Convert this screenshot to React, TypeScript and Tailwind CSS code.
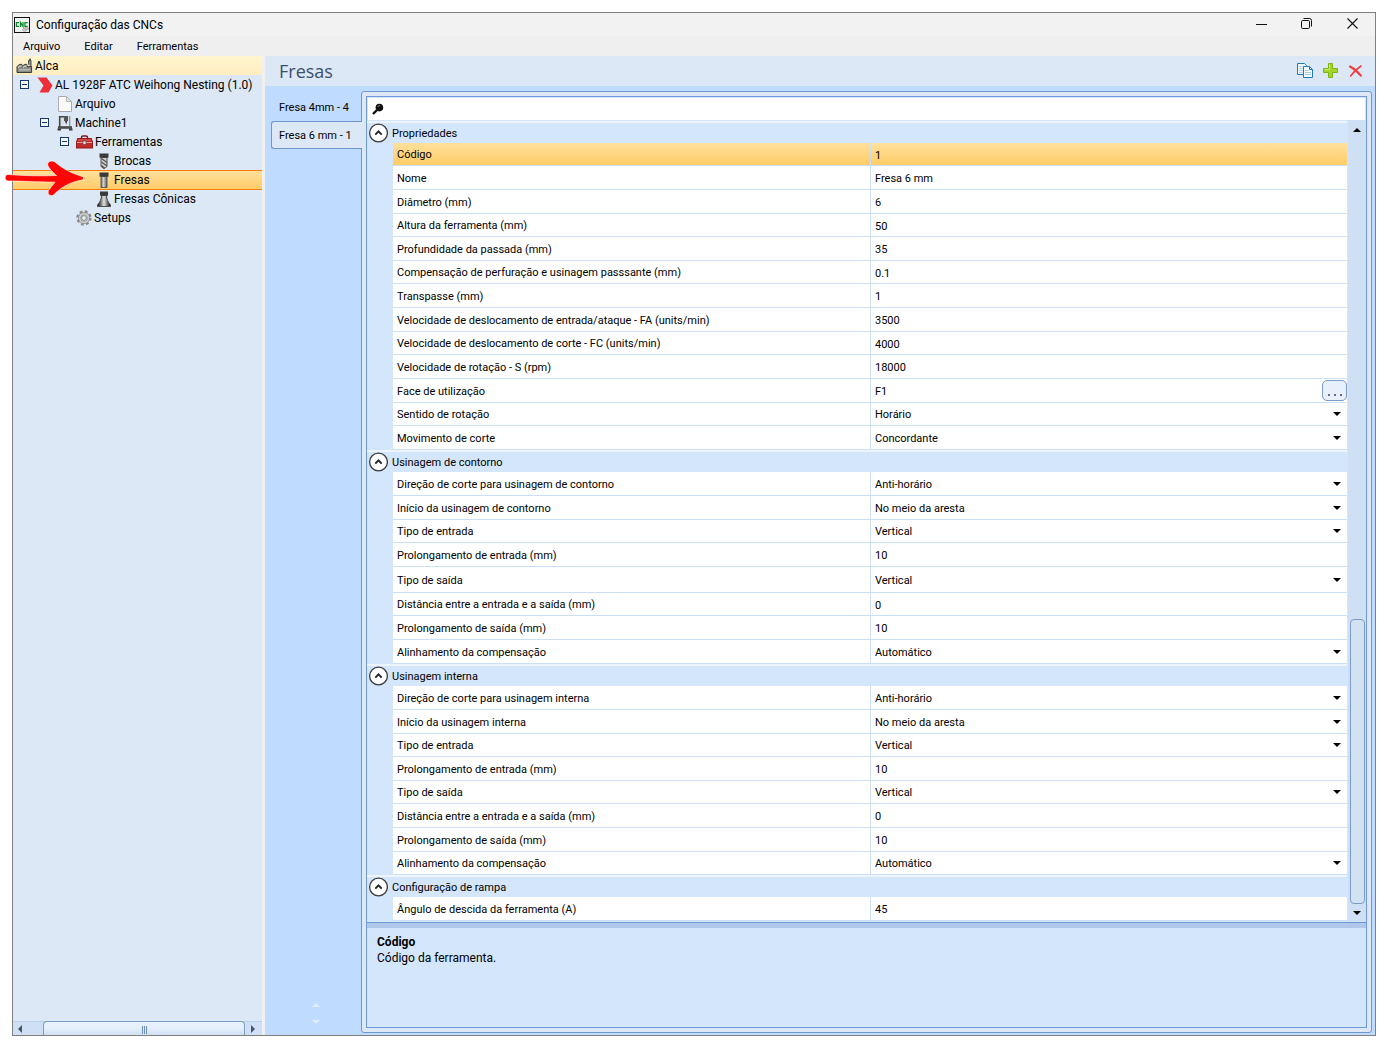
import React, { useState } from "react";

type Size = "s" | "m" | "l";
type Kind = "text" | "select" | "browse";
interface Prop {
  label: string;
  value: string;
  size: Size;
  kind?: Kind;
}
interface Section {
  title: string;
  rows: Prop[];
}

const sections: Section[] = [
  {
    title: "Propriedades",
    rows: [
      { label: "Código", value: "1", size: "s" },
      { label: "Nome", value: "Fresa 6 mm", size: "m" },
      { label: "Diâmetro (mm)", value: "6", size: "m" },
      { label: "Altura da ferramenta (mm)", value: "50", size: "s" },
      { label: "Profundidade da passada (mm)", value: "35", size: "m" },
      { label: "Compensação de perfuração e usinagem passsante (mm)", value: "0.1", size: "s" },
      { label: "Transpasse (mm)", value: "1", size: "m" },
      { label: "Velocidade de deslocamento de entrada/ataque - FA (units/min)", value: "3500", size: "m" },
      { label: "Velocidade de deslocamento de corte - FC (units/min)", value: "4000", size: "s" },
      { label: "Velocidade de rotação - S (rpm)", value: "18000", size: "m" },
      { label: "Face de utilização", value: "F1", size: "m", kind: "browse" },
      { label: "Sentido de rotação", value: "Horário", size: "s", kind: "select" },
      { label: "Movimento de corte", value: "Concordante", size: "m", kind: "select" },
    ],
  },
  {
    title: "Usinagem de contorno",
    rows: [
      { label: "Direção de corte para usinagem de contorno", value: "Anti-horário", size: "m", kind: "select" },
      { label: "Início da usinagem de contorno", value: "No meio da aresta", size: "m", kind: "select" },
      { label: "Tipo de entrada", value: "Vertical", size: "s", kind: "select" },
      { label: "Prolongamento de entrada (mm)", value: "10", size: "m" },
      { label: "Tipo de saída", value: "Vertical", size: "l", kind: "select" },
      { label: "Distância entre a entrada e a saída (mm)", value: "0", size: "s" },
      { label: "Prolongamento de saída (mm)", value: "10", size: "m" },
      { label: "Alinhamento da compensação", value: "Automático", size: "m", kind: "select" },
    ],
  },
  {
    title: "Usinagem interna",
    rows: [
      { label: "Direção de corte para usinagem interna", value: "Anti-horário", size: "m", kind: "select" },
      { label: "Início da usinagem interna", value: "No meio da aresta", size: "m", kind: "select" },
      { label: "Tipo de entrada", value: "Vertical", size: "s", kind: "select" },
      { label: "Prolongamento de entrada (mm)", value: "10", size: "m" },
      { label: "Tipo de saída", value: "Vertical", size: "s", kind: "select" },
      { label: "Distância entre a entrada e a saída (mm)", value: "0", size: "m" },
      { label: "Prolongamento de saída (mm)", value: "10", size: "m" },
      { label: "Alinhamento da compensação", value: "Automático", size: "s", kind: "select" },
    ],
  },
  {
    title: "Configuração de rampa",
    rows: [{ label: "Ângulo de descida da ferramenta (A)", value: "45", size: "m" }],
  },
];

const rowHeights: Record<Size, string> = { s: "h-[23px]", m: "h-6", l: "h-[26px]" };

function Caret({ className = "" }: { className?: string }) {
  return (
    <svg width="8" height="4" viewBox="0 0 8 4" className={className} aria-hidden="true">
      <path d="M0 0H8L4 4Z" fill="#000" />
    </svg>
  );
}

function AppIcon() {
  return (
    <svg width="16" height="16" viewBox="0 0 16 16" aria-hidden="true">
      <rect x="0.5" y="0.5" width="15" height="15" fill="#eef3ee" stroke="#111" />
      <g fill="none" stroke="#0c8a2b" strokeWidth="1.2">
        <path d="M5 5.6H2.4V9.4H5" />
        <path d="M6.5 10V5.6L9 9.4V5" />
        <path d="M13.8 5.6H10.9V9.4H13.8" />
      </g>
      <circle cx="10.6" cy="12.6" r="1.8" fill="#ccc" stroke="#888" strokeWidth="0.9" strokeDasharray="1 0.6" />
      <circle cx="13" cy="11.4" r="1.5" fill="#ccc" stroke="#888" strokeWidth="0.9" strokeDasharray="1 0.6" />
    </svg>
  );
}

function FactoryIcon() {
  return (
    <svg width="17" height="16" viewBox="0 0 17 16" aria-hidden="true">
      <path d="M12.6 6.5V2.5H15V9" fill="#999" stroke="#444" />
      <path d="M13 1.6H15" stroke="#555" strokeWidth="1.6" />
      <path d="M1 14.5V8.6C3 6 5 6 6 6.6V8.6C8 6 10 6 11 6.6V8.6H15.6V14.5Z" fill="#8a8a86" stroke="#3d3d3b" />
      <path d="M2 9.6C3.6 8 5 8 5.8 8M7 9.6C8.6 8 10 8 10.8 8" stroke="#e6e6e0" fill="none" />
      <path d="M3 11.8H14" stroke="#c4c4be" strokeWidth="1.2" />
    </svg>
  );
}

function BrandIcon() {
  return (
    <svg width="16" height="16" viewBox="0 0 16 16" aria-hidden="true">
      <path d="M0.5 0.5H9.5L15.5 8.5L11.5 15.5H2.5L6.5 8.5Z" fill="#ee2f37" />
    </svg>
  );
}

function PageIcon() {
  return (
    <svg width="16" height="16" viewBox="0 0 16 16" aria-hidden="true">
      <path d="M1.5 0.5H9.5L14.5 5.5V15.5H1.5Z" fill="#fbfbfb" stroke="#a9a9a9" />
      <path d="M9.5 0.5V5.5H14.5Z" fill="#e2e2e2" stroke="#b5b5b5" />
    </svg>
  );
}

function MachineIcon() {
  return (
    <svg width="16" height="16" viewBox="0 0 16 16" aria-hidden="true">
      <path d="M2.7 12V1.7H10.3V5.5" fill="#d8dde4" stroke="#484848" strokeWidth="1.6" />
      <rect x="7" y="1" width="4" height="5" fill="#555" />
      <path d="M8 6H10.3L9.2 9.6Z" fill="#333" />
      <path d="M12.7 1V11" stroke="#8a8a8a" strokeWidth="1.2" />
      <rect x="1" y="11.2" width="14" height="2.6" fill="#4a4a4a" />
      <path d="M0.5 13.5H4V15.5H0.5ZM12 13.5H15.5V15.5H12Z" fill="#3a3a3a" />
    </svg>
  );
}

function ToolboxIcon() {
  return (
    <svg width="17" height="16" viewBox="0 0 17 16" aria-hidden="true">
      <path d="M5.5 5V3.3Q5.5 2 7 2H10Q11.5 2 11.5 3.3V5" fill="none" stroke="#7a1515" strokeWidth="1.4" />
      <path d="M1.5 4.5H15.5L16.5 8.5H0.5Z" fill="#d9423f" stroke="#8f1a1a" />
      <rect x="0.5" y="8" width="16" height="6" fill="#c62828" stroke="#8f1a1a" />
      <path d="M1 8.5H16" stroke="#f2a09c" />
      <rect x="7" y="7" width="3" height="3.6" fill="#eee" stroke="#555" strokeWidth="0.8" />
    </svg>
  );
}

function DrillIcon() {
  return (
    <svg width="16" height="16" viewBox="0 0 16 16" aria-hidden="true">
      <path d="M5 4.5H11V13.5L8 15.7L5 13.5Z" fill="#d0d0d0" stroke="#555" />
      <path d="M5.5 5.5L11 9.5M5.5 9L11 13M5.5 12.5L8.5 15" stroke="#555" strokeWidth="1.3" />
      <rect x="3.5" y="0.5" width="9" height="4.2" fill="#3a3a3a" />
    </svg>
  );
}

function MillIcon() {
  return (
    <svg width="16" height="16" viewBox="0 0 16 16" aria-hidden="true">
      <defs>
        <linearGradient id="mill" x1="0" x2="1">
          <stop offset="0" stopColor="#666" />
          <stop offset="0.4" stopColor="#d4d4d4" />
          <stop offset="1" stopColor="#5a5a5a" />
        </linearGradient>
      </defs>
      <rect x="5" y="4.5" width="6" height="11" fill="url(#mill)" stroke="#555" strokeWidth="0.9" />
      <rect x="3.5" y="0.5" width="9" height="4.2" fill="#3a3a3a" />
    </svg>
  );
}

function ConeIcon() {
  return (
    <svg width="16" height="16" viewBox="0 0 16 16" aria-hidden="true">
      <defs>
        <linearGradient id="cone" x1="0" x2="1">
          <stop offset="0.1" stopColor="#333" />
          <stop offset="0.5" stopColor="#e2e2e2" />
          <stop offset="0.9" stopColor="#333" />
        </linearGradient>
      </defs>
      <path d="M5.5 4.5H10.5C10.5 8 12 11 14.5 14V15.5H1.5V14C4 11 5.5 8 5.5 4.5Z" fill="url(#cone)" stroke="#444" strokeWidth="0.9" />
      <rect x="4" y="0.5" width="8" height="4.2" fill="#3a3a3a" />
    </svg>
  );
}

function GearIcon() {
  return (
    <svg width="16" height="16" viewBox="0 0 16 16" aria-hidden="true">
      <circle cx="8" cy="8" r="6.4" fill="none" stroke="#8a8a8a" strokeWidth="2.6" strokeDasharray="2.7 2.326" />
      <circle cx="8" cy="8" r="4.5" fill="none" stroke="#8a8a8a" strokeWidth="3" />
      <circle cx="8" cy="8" r="4.4" fill="none" stroke="#d0d0d0" strokeWidth="1.7" />
      <circle cx="8" cy="8" r="2.4" fill="#e6edf6" stroke="#8a8a8a" />
    </svg>
  );
}

interface Node {
  label: string;
  icon: React.ReactNode;
  pad: string;
  open?: boolean;
  selected?: boolean;
}

const nodes: Node[] = [
  { label: "AL 1928F ATC Weihong Nesting (1.0)", icon: <BrandIcon />, pad: "pl-[7px]", open: true },
  { label: "Arquivo", icon: <PageIcon />, pad: "pl-[43px]" },
  { label: "Machine1", icon: <MachineIcon />, pad: "pl-[27px]", open: true },
  { label: "Ferramentas", icon: <ToolboxIcon />, pad: "pl-[47px]", open: true },
  { label: "Brocas", icon: <DrillIcon />, pad: "pl-[82px]" },
  { label: "Fresas", icon: <MillIcon />, pad: "pl-[82px]", selected: true },
  { label: "Fresas Cônicas", icon: <ConeIcon />, pad: "pl-[82px]" },
  { label: "Setups", icon: <GearIcon />, pad: "pl-[62px]" },
];

function Tree() {
  return (
    <ul role="tree" aria-label="Máquinas" className="flex-1 text-[12px] leading-4">
      <li role="treeitem" className="flex h-[19px] items-center gap-[2px] bg-gradient-to-b from-[#fff5cf] to-[#ffedc0] pl-[3px] pt-px">
        <FactoryIcon />
        <span>Alca</span>
      </li>
      {nodes.map((n) => (
        <li
          key={n.label}
          role="treeitem"
          aria-selected={!!n.selected}
          className={
            "flex items-center whitespace-nowrap " +
            n.pad +
            (n.selected ? " -mb-px h-5 border-y border-[#f57c0e] bg-gradient-to-b from-[#ffe09c] to-[#ffcc66]" : " h-[19px]")
          }
        >
          {n.open && (
            <button type="button" aria-label={"Recolher " + n.label} className="mr-[7px]">
              <svg width="9" height="9" viewBox="0 0 9 9" className="block" aria-hidden="true">
                <rect x="0.5" y="0.5" width="8" height="8" fill="#f4f8fd" stroke="#15366f" />
                <path d="M2 4.5H7" stroke="#15366f" />
              </svg>
            </button>
          )}
          <span className="mr-[2px] flex w-[17px] shrink-0 justify-center">{n.icon}</span>
          <span>{n.label}</span>
        </li>
      ))}
    </ul>
  );
}

function PropertyRow({ prop, id, selected }: { prop: Prop; id: string; selected: boolean }) {
  const kind = prop.kind ?? "text";
  return (
    <div
      className={
        "flex border-b border-[#cbdff5] " + rowHeights[prop.size] + " " +
        (selected ? "bg-gradient-to-b from-[#ffe09c] to-[#ffcc66]" : "bg-white")
      }
    >
      <label htmlFor={id} className="flex w-[478px] shrink-0 items-center border-r border-[#cbdff5] pl-1 pt-[2px] whitespace-nowrap">
        {prop.label}
      </label>
      <div className="relative flex flex-1 items-center">
        {kind === "select" ? (
          <>
            <select id={id} defaultValue={prop.value} className="h-full w-full appearance-none bg-transparent pl-1 pt-[2px] outline-none">
              <option>{prop.value}</option>
            </select>
            <Caret className="pointer-events-none absolute right-[6px]" />
          </>
        ) : (
          <input id={id} type="text" defaultValue={prop.value} className="h-full w-full min-w-0 bg-transparent pl-1 pt-[2px] outline-none" />
        )}
        {kind === "browse" && (
          <button
            type="button"
            aria-label="Selecionar face"
            className="flex h-[21px] w-[25px] shrink-0 items-center justify-center gap-1 rounded-[5px] border border-[#7c9cc8] bg-[#e8f0fb] pt-2"
          >
            <i className="size-[2px] bg-[#5f6c8c]" />
            <i className="size-[2px] bg-[#5f6c8c]" />
            <i className="size-[2px] bg-[#5f6c8c]" />
          </button>
        )}
      </div>
    </div>
  );
}

function PropertySection({ section, index }: { section: Section; index: number }) {
  const [open, setOpen] = useState(true);
  return (
    <section className="bg-[#d4e6fc]">
      <h2 className="flex h-[22px] items-center border-t-2 border-[#edf4fd]">
        <button
          type="button"
          aria-expanded={open}
          onClick={() => setOpen(!open)}
          className="flex items-center gap-1 whitespace-nowrap"
        >
          <svg width="20" height="20" viewBox="0 0 20 20" className="ml-px block" aria-hidden="true">
            <circle cx="10.5" cy="10" r="8.9" fill="#fff" stroke="#3c3c3c" strokeWidth="1.3" />
            <path d="M7.3 11.6L10.5 8.4L13.7 11.6" fill="none" stroke="#222" strokeWidth="1.9" />
          </svg>
          <span className="pt-[2px]">{section.title}</span>
        </button>
      </h2>
      {open && (
        <div className="pl-[26px]">
          {section.rows.map((p, i) => (
            <PropertyRow key={p.label} prop={p} id={"prop-" + index + "-" + i} selected={index === 0 && i === 0} />
          ))}
        </div>
      )}
    </section>
  );
}

function Toolbar() {
  return (
    <div className="flex items-center gap-[9px] pr-3">
      <button type="button" aria-label="Duplicar">
        <svg width="17" height="17" viewBox="0 0 17 17" className="block" aria-hidden="true">
          <path d="M0.5 0.5H7.5L9.5 2.5V11.5H0.5Z" fill="#eef7fd" stroke="#1c7cb8" />
          <path d="M2 3.5H5.5M2 5.5H6M2 7.5H6M2 9.500H6" stroke="#b5d6ea" />
          <path d="M6.5 3.5H12.5L15.5 6.5V14.5H6.5Z" fill="#f5fbff" stroke="#1c7cb8" />
          <path d="M12.5 3.5V6.5H15.5" fill="none" stroke="#1c7cb8" />
          <path d="M8 7.5H11.5M8 9.5H14M8 11.5H14" stroke="#a8cfe6" />
        </svg>
      </button>
      <button type="button" aria-label="Adicionar">
        <svg width="16" height="16" viewBox="0 0 16 16" className="block" aria-hidden="true">
          <path d="M5.5 0.5H9.5V5.5H14.5V9.5H9.5V14.5H5.5V9.5H0.5V5.5H5.5Z" fill="#a4d62a" stroke="#7fb414" />
          <path d="M6.5 1.5V6.5H1.5" fill="none" stroke="#c9ea6c" />
        </svg>
      </button>
      <button type="button" aria-label="Excluir">
        <svg width="15" height="14" viewBox="0 0 15 14" className="block" aria-hidden="true">
          <path d="M2 2.6C6 4.6 9.5 8 12.8 11.6" fill="none" stroke="#f23b3b" strokeWidth="2.2" strokeLinecap="round" />
          <path d="M13 2C9 4.6 5 8.600 2.600 12" fill="none" stroke="#f23b3b" strokeWidth="1.6" strokeLinecap="round" />
        </svg>
      </button>
    </div>
  );
}

function TitleBar() {
  return (
    <header className="flex h-[23px] items-center bg-[#f2f2f2] pl-px">
      <AppIcon />
      <h1 className="ml-[6px] flex-1 text-[12px]">Configuração das CNCs</h1>
      <button type="button" aria-label="Minimizar" className="mr-[34px]">
        <svg width="11" height="11" viewBox="0 0 11 11" className="block" aria-hidden="true">
          <path d="M0 5.5H11" stroke="#111" />
        </svg>
      </button>
      <button type="button" aria-label="Restaurar" className="mb-[3px] mr-[35px]">
        <svg width="11" height="11" viewBox="0 0 11 11" className="block" aria-hidden="true">
          <rect x="0.5" y="2.5" width="8" height="8" rx="1.2" fill="none" stroke="#111" />
          <path d="M2.5 0.5H8.5Q10.5 0.5 10.5 2.5V8.5" fill="none" stroke="#111" />
        </svg>
      </button>
      <button type="button" aria-label="Fechar" className="mb-[3px] mr-[17px]">
        <svg width="11" height="11" viewBox="0 0 11 11" className="block" aria-hidden="true">
          <path d="M0.5 0.5L10.5 10.5M10.5 0.5L0.5 10.5" stroke="#111" strokeWidth="1.1" />
        </svg>
      </button>
    </header>
  );
}

function HorizontalScroll() {
  return (
    <div className="flex h-[14px] shrink-0 border-t border-[#bcd0ea] bg-[#cfdff4]">
      <span className="flex w-[30px] items-center pl-[5px] pt-px">
        <svg width="4" height="8" viewBox="0 0 4 8" aria-hidden="true"><path d="M4 0V8L0 4Z" fill="#44546e" /></svg>
      </span>
      <span className="-mt-px flex flex-1 items-center justify-center gap-px rounded-t-sm border border-b-0 border-[#7c9cc8] bg-gradient-to-b from-[#eaf3fd] via-[#e4effb] to-[#cfe0f3] pt-[3px]">
        <i className="h-2 w-px bg-[#6f8fbd]" />
        <i className="h-2 w-px bg-[#6f8fbd]" />
        <i className="h-2 w-px bg-[#6f8fbd]" />
      </span>
      <span className="flex w-[17px] items-center pl-[6px] pt-px">
        <svg width="4" height="8" viewBox="0 0 4 8" aria-hidden="true"><path d="M0 0V8L4 4Z" fill="#44546e" /></svg>
      </span>
    </div>
  );
}

function VerticalScroll() {
  return (
    <div className="ml-px flex w-[18px] flex-col items-center bg-[#cfdff4]">
      <Caret className="mt-2 shrink-0 rotate-180" />
      <span className="flex-[488]" />
      <span className="w-[15px] flex-[284] rounded-sm border border-[#7c9cc8] bg-[#d3e2f3]" />
      <Caret className="mb-[7px] mt-[7px] shrink-0" />
    </div>
  );
}

function PointerArrow() {
  return (
    <svg width="82" height="40" viewBox="0 0 82 40" className="pointer-events-none absolute left-1 top-[159px]" aria-hidden="true">
      <path
        d="M4 15.5C0.5 15.5 0 21.5 4 22C18 22 32 23 51 23.2C49 26 46.5 28.5 44.5 31.5C43 35 46 38 49.5 36C56 29.5 64 23.5 78 21C80 20 80 18.2 78 17.4C67 14 59 10 51 3C47 0.5 42.5 3.2 44 7C46 10.5 49 13.5 52.5 16.5C38 17 22 17 4 15.5Z"
        fill="#fe0505"
        stroke="#fff"
        strokeWidth="0.6"
      />
    </svg>
  );
}

export default function App() {
  const menus = ["Arquivo", "Editar", "Ferramentas"];
  return (
    <div className="relative flex min-h-screen flex-col bg-white px-3 pb-1 pt-3 font-['Roboto','Open_Sans',sans-serif] text-[11px] leading-4 text-black">
      <div className="flex flex-1 flex-col border border-[#808080] bg-[#f0f0f0]">
        <TitleBar />
        <nav className="flex h-5 items-center gap-6 bg-[#efefef] pl-[10px] pt-px">
          {menus.map((m) => (
            <button key={m} type="button">{m}</button>
          ))}
        </nav>
        <div className="flex flex-1">
          <aside className="mr-[3px] flex w-[249px] shrink-0 flex-col bg-[#dce8f6]">
            <Tree />
            <HorizontalScroll />
          </aside>
          <main className="flex min-w-0 flex-1 flex-col bg-[#bfdbff]">
            <div className="flex h-[30px] items-center justify-between bg-[#dce8f6] pl-[14px]">
              <h2 className="font-['Open_Sans',sans-serif] text-[18px] leading-6 text-[#3b4f6b]">Fresas</h2>
              <Toolbar />
            </div>
            <div className="flex flex-1 pb-[2px] pr-[3px] pt-[5px]">
              <div role="tablist" aria-orientation="vertical" className="z-10 -mr-px flex w-[97px] flex-col pl-[6px] pt-[2px]">
                <button type="button" role="tab" aria-selected="false" className="h-7 pl-2 pt-[2px] text-left whitespace-nowrap">Fresa 4mm - 4</button>
                <button
                  type="button"
                  role="tab"
                  aria-selected="true"
                  className="h-7 rounded-l-[3px] border border-r-0 border-[#6f97d0] bg-[#dce8f6] pl-[7px] pt-[2px] text-left whitespace-nowrap"
                >
                  Fresa 6 mm - 1
                </button>
                <div className="mb-[9px] mt-auto flex flex-col items-center gap-[13px] pr-[2px]">
                  <svg width="8" height="4" viewBox="0 0 8 4" aria-hidden="true"><path d="M0 4H8L4 0Z" fill="#e2edfa" /></svg>
                  <svg width="8" height="4" viewBox="0 0 8 4" aria-hidden="true"><path d="M0 0H8L4 4Z" fill="#e2edfa" /></svg>
                </div>
              </div>
              <div className="flex min-w-0 flex-1 flex-col rounded-[3px] border border-[#6f97d0] bg-[#dce8f6] p-1">
                <div className="flex flex-1 flex-col border border-[#6f9ad8] bg-[#d4e6fc]">
                  <label className="m-px mb-0 flex h-[22px] items-center bg-white pl-1">
                    <svg width="12" height="12" viewBox="0 0 12 12" aria-hidden="true">
                      <path d="M1 11L5 7" stroke="#111" strokeWidth="2.4" />
                      <circle cx="7.4" cy="4.6" r="3.8" fill="#111" />
                      <path d="M5.8 3.8Q6.4 2.6 7.8 2.6" fill="none" stroke="#8fa8c8" />
                    </svg>
                    <input type="search" aria-label="Pesquisar" className="ml-1 h-full flex-1 bg-transparent outline-none" />
                  </label>
                  <div className="flex">
                    <div className="min-w-0 flex-1 py-px">
                      {sections.map((s, i) => (
                        <PropertySection key={s.title} section={s} index={i} />
                      ))}
                    </div>
                    <VerticalScroll />
                  </div>
                  <div className="h-[6px] shrink-0 border-t border-[#6f9ad8] bg-[#afc8e9]" />
                  <div className="px-[10px] pt-[6px] text-[12px] leading-4">
                    <h3 className="font-bold">Código</h3>
                    <p>Código da ferramenta.</p>
                  </div>
                </div>
              </div>
            </div>
          </main>
        </div>
      </div>
      <PointerArrow />
    </div>
  );
}
